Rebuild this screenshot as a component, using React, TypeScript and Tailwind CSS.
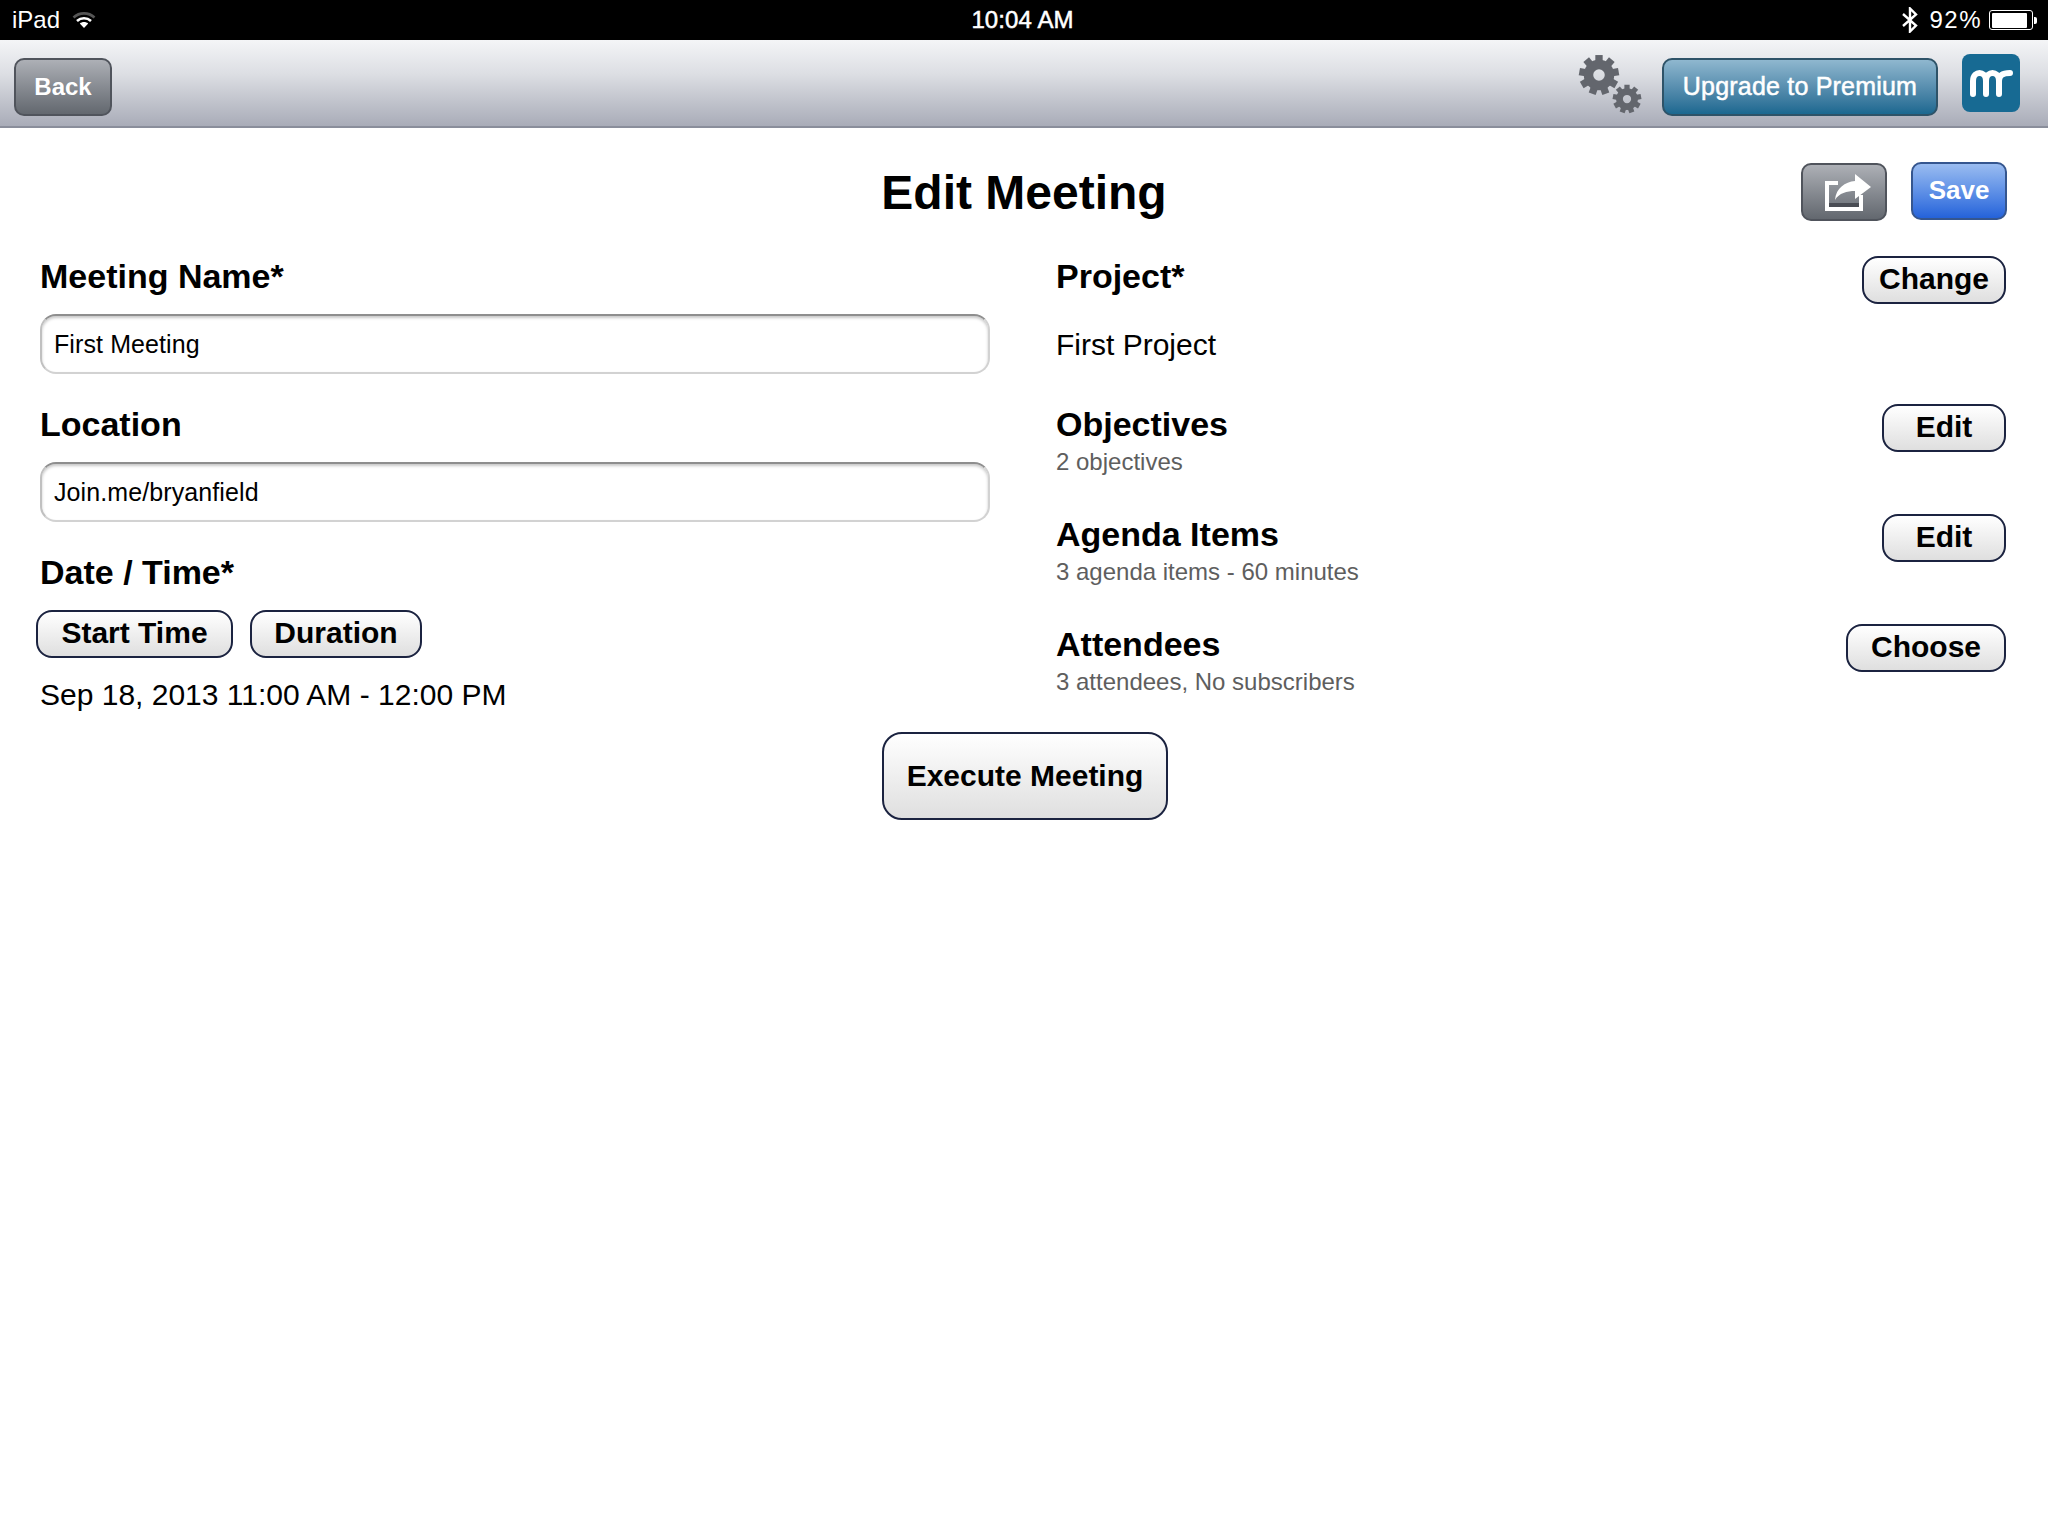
const Gear = ({ size, teeth, className }: { size: number; teeth: number; className?: string }) => (
  <svg width={size} height={size} viewBox="0 0 40 40" className={className}>
    {Array.from({ length: teeth }).map((_, i) => (
      <rect
        key={i}
        x="16.5"
        y="1"
        width="7"
        height="8"
        fill="#63666d"
        transform={`rotate(${(i * 360) / teeth} 20 20)`}
      />
    ))}
    <circle cx="20" cy="20" r="10" fill="none" stroke="#63666d" strokeWidth="9" />
  </svg>
);

const Label = ({ children }: { children: React.ReactNode }) => (
  <h2 className="text-[34px] leading-[40px] font-bold text-black">{children}</h2>
);

const PillButton = ({ label, className = '' }: { label: string; className?: string }) => (
  <button className={`h-[48px] rounded-[16px] border-2 border-[#1b2340] bg-gradient-to-b from-white to-[#dfdfdf] pb-[2px] text-[30px] leading-[40px] font-bold text-black ${className}`}>
    {label}
  </button>
);

const TextField = ({ value }: { value: string }) => (
  <div className="flex h-[60px] items-center rounded-[16px] border-2 border-[#d2d2d2] border-t-[#8e8e8e] border-l-[#c0c0c0] bg-white pl-[12px] pt-[2px] text-[25px] tracking-[0.1px] text-black shadow-[inset_0_2px_3px_rgba(0,0,0,0.22)]">
    {value}
  </div>
);

const SummaryRow = ({ title, detail, action, width }: { title: string; detail: string; action: string; width: string }) => (
  <div className="flex h-[110px] items-start justify-between">
    <div>
      <Label>{title}</Label>
      <p className="mt-[3px] text-[24px] leading-[30px] text-[#5e5e5e]">{detail}</p>
    </div>
    <PillButton label={action} className={width} />
  </div>
);

export default function App() {
  return (
    <div className="min-h-[1536px] bg-white font-['Liberation_Sans',Arial,sans-serif]">
      {/* status bar */}
      <div className="grid h-[40px] grid-cols-3 items-center bg-black pl-[12px] pr-[11px] text-white">
        <div className="flex items-center gap-[12px] text-[24px]">
          <span>iPad</span>
          <svg width="24" height="18" viewBox="0 0 24 18" fill="none">
            <path d="M1.5 6.5C7.5 1 16.5 1 22.5 6.5" stroke="#555" strokeWidth="2.6" />
            <path d="M5 10C9 6.3 15 6.3 19 10" stroke="#fff" strokeWidth="2.6" />
            <path d="M12 17L7.8 12.6C10.2 10.6 13.8 10.6 16.2 12.6Z" fill="#fff" />
          </svg>
        </div>
        <div className="pr-[4px] text-center text-[24px] tracking-[0.1px] [-webkit-text-stroke:0.5px_#fff]">10:04 AM</div>
        <div className="flex items-center justify-end gap-[11px] text-[24px]">
          <svg width="16" height="26" viewBox="0 0 16 26" fill="none" stroke="#fff" strokeWidth="2.4">
            <path d="M1 7L14 18.5L8 24.5V1.5L14 7.5L1 19" />
          </svg>
          <span className="tracking-[1.5px]">92%</span>
          <div className="-ml-[4px] flex items-center">
            <div className="flex h-[20px] w-[44px] items-center rounded-[3px] border-[1.5px] border-white p-[1.5px]">
              <div className="h-full w-[92%] rounded-[1px] bg-white" />
            </div>
            <div className="ml-[1px] h-[7px] w-[3px] rounded-r-[2px] bg-white" />
          </div>
        </div>
      </div>

      {/* nav bar */}
      <div className="flex h-[88px] items-center border-b-2 border-[#8a8e9b] bg-gradient-to-b from-[#f4f5f7] via-[#dcdee3] via-40% to-[#a9acb8] pl-[14px] pr-[28px] pt-[8px]">
        <button className="h-[58px] w-[98px] rounded-[10px] border-2 border-[#50545c] bg-gradient-to-b from-[#adb0b6] to-[#63686f] text-[24px] font-bold text-white">
          Back
        </button>
        <div className="relative ml-auto mr-[20px] h-[60px] w-[64px] -translate-y-[3px]">
          <Gear size={42} teeth={9} className="absolute left-0 top-0" />
          <Gear size={30} teeth={9} className="absolute right-0 bottom-0" />
        </div>
        <button className="h-[58px] w-[276px] rounded-[10px] border-2 border-[#2e5368] bg-gradient-to-b from-[#8fb7cf] to-[#1a6890] text-[25px] tracking-[0.2px] text-white [-webkit-text-stroke:0.5px_#fff]">
          Upgrade to Premium
        </button>
        <div className="ml-[24px] flex h-[58px] w-[58px] -translate-y-[4px] items-center justify-center rounded-[8px] bg-[#176a93]">
          <svg width="44" height="28" viewBox="0 0 44 28" fill="none" stroke="#fff" strokeWidth="6" strokeLinecap="round">
            <path d="M4 25V12C4 6 8 4 10.5 4C13 4 17 6 17 12V25M17 12C17 6 21 4 23.5 4C26 4 30 6 30 12V25M30 12C30 6 34 4 41 4" />
          </svg>
        </div>
      </div>

      <main className="pl-[40px] pr-[42px] pt-[35px]">
        {/* title row */}
        <div className="grid h-[60px] grid-cols-[1fr_auto_1fr] items-start">
          <div />
          <h1 className="ml-[2px] mt-[2px] text-[48px] leading-[56px] font-bold text-black">Edit Meeting</h1>
          <div className="-mr-[1px] flex justify-end gap-[24px]">
            <button className="flex h-[58px] w-[86px] items-center justify-center rounded-[10px] border-2 border-[#50545c] bg-gradient-to-b from-[#adb0b6] to-[#63686f]">
              <svg width="46" height="37" viewBox="0 0 46 37" className="ml-[8px]">
                <rect x="4" y="29" width="30" height="4" fill="#4a4d54" />
                <path d="M0 7H13V11H4V33H34V21H38V37H0Z" fill="#fff" />
                <path d="M10 26C11 14 20 8 30 7V0L46 13L30 25V17C22 17 14 19 10 26Z" fill="#fff" />
              </svg>
            </button>
            <button className="h-[58px] w-[96px] -translate-y-[1px] rounded-[10px] border-2 border-[#35568f] bg-gradient-to-b from-[#9abcf0] to-[#2462da] pb-[2px] text-[26px] font-bold text-white">
              Save
            </button>
          </div>
        </div>

        <div className="mt-[33px] grid grid-cols-2 gap-x-[66px]">
          {/* left column */}
          <div>
            <div className="h-[148px]">
              <Label>Meeting Name*</Label>
              <div className="mt-[18px]"><TextField value="First Meeting" /></div>
            </div>
            <div className="h-[148px]">
              <Label>Location</Label>
              <div className="mt-[18px]"><TextField value="Join.me/bryanfield" /></div>
            </div>
            <Label>Date / Time*</Label>
            <div className="ml-[-4px] mt-[18px] flex gap-[17px]">
              <PillButton label="Start Time" className="w-[197px]" />
              <PillButton label="Duration" className="w-[172px]" />
            </div>
            <p className="mt-[19px] text-[30px] leading-[36px] text-black">Sep 18, 2013 11:00 AM - 12:00 PM</p>
          </div>

          {/* right column */}
          <div>
            <div className="flex h-[148px] items-start justify-between">
              <div>
                <Label>Project*</Label>
                <p className="mt-[31px] text-[30px] leading-[36px] text-black">First Project</p>
              </div>
              <PillButton label="Change" className="w-[144px]" />
            </div>
            <SummaryRow title="Objectives" detail="2 objectives" action="Edit" width="w-[124px]" />
            <SummaryRow title="Agenda Items" detail="3 agenda items - 60 minutes" action="Edit" width="w-[124px]" />
            <SummaryRow title="Attendees" detail="3 attendees, No subscribers" action="Choose" width="w-[160px]" />
          </div>
        </div>

        <div className="mt-[-2px] ml-[4px] flex justify-center">
          <button className="h-[88px] w-[286px] rounded-[20px] border-2 border-[#1b2340] bg-gradient-to-b from-white to-[#dfdfdf] pb-[2px] text-[30px] font-bold text-black">
            Execute Meeting
          </button>
        </div>
      </main>
    </div>
  );
}
